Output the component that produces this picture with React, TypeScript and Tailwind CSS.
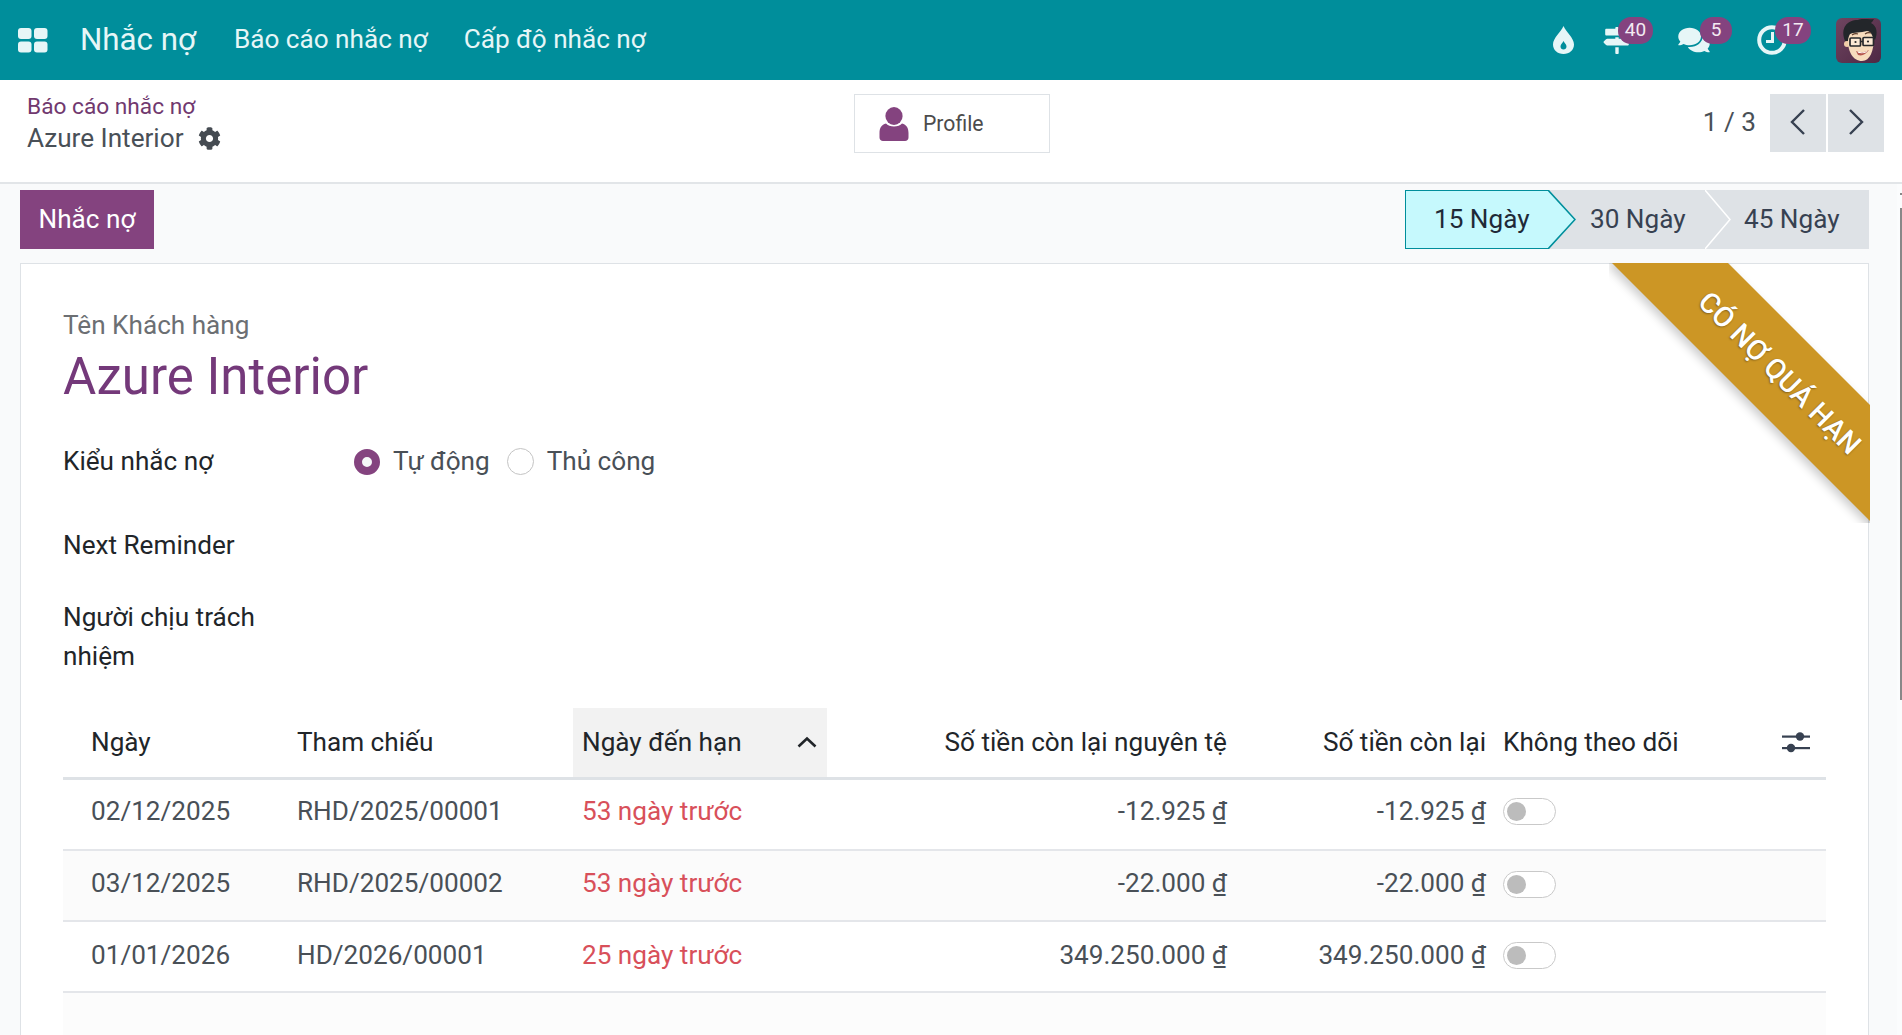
import React from "react";
import { FaCog, FaComments, FaMapSigns } from "react-icons/fa";

const rows = [
  { date: "02/12/2025", ref: "RHD/2025/00001", due: "53 ngày trước", a: "-12.925 ₫", alt: false, h: "h-[72px]", pb: "pb-[6px]" },
  { date: "03/12/2025", ref: "RHD/2025/00002", due: "53 ngày trước", a: "-22.000 ₫", alt: true, h: "h-[71px]", pb: "pb-[4px]" },
  { date: "01/01/2026", ref: "HD/2026/00001", due: "25 ngày trước", a: "349.250.000 ₫", alt: false, h: "h-[71px]", pb: "pb-[3px]" },
];

function Badge({ n, left, width }: { n: string; left: string; width: string }) {
  return (
    <span className={`absolute top-[17px] ${left} ${width} h-[27px] rounded-[13px] bg-[#84437f] text-[19px] leading-[26px] text-center text-[#f3eaf2]`}>
      {n}
    </span>
  );
}

function Avatar() {
  return (
    <svg viewBox="0 0 45 45" className="ml-[49px] w-[45px] h-[45px] rounded-[6px]">
      <defs>
        <linearGradient id="av" x1="0" y1="0" x2="1" y2="1">
          <stop offset="0" stopColor="#6f4560" />
          <stop offset="1" stopColor="#4e2844" />
        </linearGradient>
      </defs>
      <rect width="45" height="45" fill="url(#av)" />
      <circle cx="11" cy="26" r="3" fill="#f0cda8" />
      <path d="M12 18 C11 34 17 43 26 43 C34 43 38 33 38 18 C36 10 16 10 12 18Z" fill="#f7dcbd" />
      <path d="M9 23 C4 10 11 2 22 2 C26 0 33 2 38 1 C37 3 36 4 35 5 C41 8 42 15 39 22 L37 20 C36 16 34 13 31 13 C25 15 17 14 14 16 C13 18 12 20 12 23Z" fill="#23262a" />
      <rect x="14" y="20" width="10.5" height="8" rx="1" fill="#fbe9d4" stroke="#26282b" strokeWidth="1.7" />
      <rect x="27" y="19.5" width="10.5" height="8" rx="1" fill="#fbe9d4" stroke="#26282b" strokeWidth="1.7" />
      <path d="M24 23.5 L27 23.5" stroke="#26282b" strokeWidth="1.4" />
      <path d="M16 17 Q19 15 22 16 M29 16 Q32 14 35 15" stroke="#5c3b2a" strokeWidth="1.1" fill="none" />
      <circle cx="19.5" cy="24" r="1.1" fill="#2a2a2a" />
      <circle cx="32" cy="23.5" r="1.1" fill="#2a2a2a" />
      <path d="M20 33 Q27 36 33 32 Q28 39 22 37Z" fill="#b5574f" />
      <path d="M21.5 33.6 Q27 35.5 31.5 33 L31 34 Q27 36 22 34.8Z" fill="#fff" />
    </svg>
  );
}

function Toggle() {
  return (
    <span className="inline-flex items-center w-[53px] h-[27px] mb-[2px] rounded-full border border-[#c9c9c9] bg-white pl-[3px] align-middle">
      <span className="w-[19px] h-[19px] rounded-full bg-[#bcbcbc]" />
    </span>
  );
}

export default function App() {
  return (
    <div className="relative w-[1902px] h-[1035px] overflow-hidden flex flex-col bg-[#f9fafb] font-['Roboto',sans-serif] text-[26.15px] leading-[39px] text-[#495057]">
      {/* top navigation */}
      <header className="flex items-center h-[80px] shrink-0 bg-[#008e9b] text-[#e6f6f7]">
        <svg viewBox="0 0 30 25" className="ml-[18px] w-[30px] h-[25px]" fill="#e6f6f7">
          <rect x="0" y="0" width="13.5" height="11" rx="3" />
          <rect x="16" y="0" width="13.5" height="11" rx="3" />
          <rect x="0" y="13.5" width="13.5" height="11" rx="3" />
          <rect x="16" y="13.5" width="13.5" height="11" rx="3" />
        </svg>
        <span className="ml-[32px] pb-[2px] text-[31.3px]">Nhắc nợ</span>
        <span className="ml-[38px] pb-[2px]">Báo cáo nhắc nợ</span>
        <span className="ml-[36px] pb-[2px]">Cấp độ nhắc nợ</span>
        <div className="ml-auto mr-[21px] flex items-center">
          <svg viewBox="0 0 21 28" className="w-[21px] h-[28px]">
            <path d="M10.5 0 C13 6 21 12 21 18.5 C21 24 16.5 28 10.5 28 C4.5 28 0 24 0 18.5 C0 12 8 6 10.5 0Z" fill="#e6f6f7" />
            <path d="M10.5 15 C11.5 17 13.5 18.5 13.5 20.5 C13.5 22.2 12.2 23.5 10.5 23.5 C8.8 23.5 7.5 22.2 7.5 20.5 C7.5 18.5 9.5 17 10.5 15Z" fill="#008e9b" />
          </svg>
          <div className="relative ml-[29px] w-[30px] h-[80px] flex items-center">
            <FaMapSigns className="w-[28px] h-[27px]" />
            <Badge n="40" left="left-[15px]" width="w-[35px]" />
          </div>
          <div className="relative ml-[44px] w-[34px] h-[80px] flex items-center">
            <FaComments className="w-[34px] h-[28px]" />
            <Badge n="5" left="left-[23px]" width="w-[32px]" />
          </div>
          <div className="relative ml-[46px] w-[30px] h-[80px] flex items-center">
            <svg viewBox="0 0 30 30" className="w-[30px] h-[30px]" fill="none" stroke="#e6f6f7">
              <circle cx="15" cy="15" r="12.8" strokeWidth="4" />
              <path d="M15.5 7 L15.5 16.5 L9 16.5" strokeWidth="3" />
            </svg>
            <Badge n="17" left="left-[18px]" width="w-[36px]" />
          </div>
          <Avatar />
        </div>
      </header>

      {/* control panel */}
      <section className="grid grid-cols-[854px_196px_1fr] h-[104px] shrink-0 bg-white border-b-2 border-[#e2e5e8]">
        <div className="pl-[27px] pt-[8px]">
          <div className="text-[22.7px] leading-[37px] text-[#71396f]">Báo cáo nhắc nợ</div>
          <div className="flex items-center h-[27px] leading-[27px] text-[#495057]">
            Azure Interior
            <FaCog className="ml-[14px] w-[23px] h-[23px] text-[#454b52]" />
          </div>
        </div>
        <div className="mt-[14px] h-[59px] flex items-center bg-white border border-[#dee2e6] pl-[24px] text-[21.2px] text-[#4c4c4c]">
          <svg viewBox="0 0 30 34" className="w-[30px] h-[34px]" fill="#84437f">
            <ellipse cx="15" cy="9" rx="8.6" ry="9" />
            <path d="M7 16.5 C10 20.5 20 20.5 23 16.5 C27.5 17.5 29.5 21 29.5 26 L29.5 30.5 C29.5 32.5 28 34 26 34 L4 34 C2 34 0.5 32.5 0.5 30.5 L0.5 26 C0.5 21 2.5 17.5 7 16.5Z" />
          </svg>
          <span className="ml-[14px]">Profile</span>
        </div>
        <div className="flex justify-end pr-[18px] pt-[14px]">
          <span className="mr-[14px] h-[58px] leading-[56px] text-[#495057]">1 / 3</span>
          <button className="w-[56px] h-[58px] pb-[2px] flex items-center justify-center bg-[#dee2e6]">
            <svg viewBox="0 0 16 28" className="w-[16px] h-[28px]" fill="none" stroke="#374151" strokeWidth="2.4">
              <path d="M14 2 L2 14 L14 26" />
            </svg>
          </button>
          <button className="ml-[2px] w-[56px] h-[58px] pb-[2px] flex items-center justify-center bg-[#dee2e6]">
            <svg viewBox="0 0 16 28" className="w-[16px] h-[28px]" fill="none" stroke="#374151" strokeWidth="2.4">
              <path d="M2 2 L14 14 L2 26" />
            </svg>
          </button>
        </div>
      </section>

      {/* content */}
      <main className="flex flex-col flex-1 min-h-0 pl-[20px] pr-[33px]">
        <div className="flex justify-between h-[59px] mt-[6px] shrink-0">
          <button className="w-[134px] h-[59px] bg-[#84437f] text-white">Nhắc nợ</button>
          <div className="flex w-[464px] h-[59px] bg-[#dee2e6] text-[#374151]">
            <div className="relative z-10 w-[143px] pl-[28px] flex items-center bg-[#c6f9fd] border-y border-l border-[#008e9b] text-[#1f2937]">
              15 Ngày
              <svg viewBox="0 0 28 59" preserveAspectRatio="none" className="absolute top-[-1px] left-full w-[28px] h-[59px]">
                <path d="M0 0 L28 29.5 L0 59Z" fill="#c6f9fd" />
                <path d="M0 0 L27 29.5 L0 59" fill="none" stroke="#008e9b" strokeWidth="1.6" />
              </svg>
            </div>
            <div className="relative w-[157px] pl-[42px] flex items-center">
              30 Ngày
              <svg viewBox="0 0 26 59" preserveAspectRatio="none" className="absolute top-0 left-full w-[26px] h-[59px]">
                <path d="M0 0 L25 29.5 L0 59" fill="none" stroke="#ffffff" strokeWidth="1.5" />
              </svg>
            </div>
            <div className="w-[164px] pl-[39px] flex items-center">45 Ngày</div>
          </div>
        </div>

        {/* sheet */}
        <div className="relative flex flex-col flex-1 min-h-0 mt-[14px] bg-white border border-[#dee2e6] border-b-0 px-[42px]">
          <div className="absolute -top-px -right-[2px] w-[261px] h-[260px] overflow-hidden">
            <div className="absolute left-[-27px] top-[71px] w-[400px] h-[82px] rotate-45 bg-[#cc9625] shadow-[0_5px_10px_rgba(0,0,0,0.2)] flex items-center justify-center pr-[6px] text-white text-[28.5px] font-medium [text-shadow:0_1px_2px_rgba(0,0,0,0.4)]">
              CÓ NỢ QUÁ HẠN
            </div>
          </div>

          <div className="pt-[42px] text-[#6c6f73]">Tên Khách hàng</div>
          <h1 className="h-[64px] leading-[64px] text-[51px] text-[#74397a]">Azure Interior</h1>

          <div className="grid grid-cols-[291px_1fr] mt-[33px] text-[#212529]">
            <div className="w-[230px]">Kiểu nhắc nợ</div>
            <div className="flex items-center text-[#495057]">
              <span className="w-[26px] h-[26px] rounded-full border-[8px] border-[#84437f] bg-[#f5f7f8]" />
              <span className="ml-[13px]">Tự động</span>
              <span className="ml-[17px] w-[27px] h-[27px] rounded-full border border-[#c4c4c4] bg-white" />
              <span className="ml-[13px]">Thủ công</span>
            </div>
          </div>
          <div className="mt-[45px] text-[#212529]">Next Reminder</div>
          <div className="mt-[33px] w-[230px] text-[#212529]">Người chịu trách nhiệm</div>

          <div className="flex-1 mt-[32px] bg-[#fcfcfc]">
            <table className="w-full table-fixed border-collapse bg-white">
              <colgroup>
                <col className="w-[225px]" />
                <col className="w-[285px]" />
                <col className="w-[254px]" />
                <col className="w-[409px]" />
                <col className="w-[259px]" />
                <col className="w-[275px]" />
                <col className="w-[56px]" />
              </colgroup>
              <thead>
                <tr className="h-[70px] border-b-[3px] border-[#dee2e6] text-[#212529]">
                  <th className="pl-[28px] font-normal text-left">Ngày</th>
                  <th className="pl-[9px] font-normal text-left">Tham chiếu</th>
                  <th className="pl-[9px] pr-[10px] font-normal text-left bg-[#f2f2f2]">
                    <div className="flex items-center justify-between">
                      Ngày đến hạn
                      <svg viewBox="0 0 20 12" className="w-[20px] h-[12px]" fill="none" stroke="#212529" strokeWidth="2.6">
                        <path d="M1.5 10.5 L10 2.5 L18.5 10.5" />
                      </svg>
                    </div>
                  </th>
                  <th className="pr-[9px] font-normal text-right">Số tiền còn lại nguyên tệ</th>
                  <th className="pr-[9px] font-normal text-right">Số tiền còn lại</th>
                  <th className="pl-[8px] font-normal text-left whitespace-nowrap">Không theo dõi</th>
                  <th className="font-normal text-left">
                    <svg viewBox="0 0 28 24" className="ml-[12px] w-[28px] h-[24px]" fill="#374151">
                      <rect x="0" y="5.5" width="28" height="2.2" />
                      <circle cx="18" cy="6.5" r="4.2" />
                      <rect x="0" y="17" width="28" height="2.2" />
                      <circle cx="9" cy="18" r="4.2" />
                    </svg>
                  </th>
                </tr>
              </thead>
              <tbody>
                {rows.map((r) => (
                  <tr key={r.ref} className={`${r.h} border-b-2 border-[#e4e6ea] ${r.alt ? "bg-[#fbfbfb]" : "bg-white"}`}>
                    <td className={`pl-[28px] ${r.pb}`}>{r.date}</td>
                    <td className={`pl-[9px] ${r.pb}`}>{r.ref}</td>
                    <td className={`pl-[9px] ${r.pb} text-[#d8505a]`}>{r.due}</td>
                    <td className={`pr-[9px] ${r.pb} text-right`}>{r.a}</td>
                    <td className={`pr-[9px] ${r.pb} text-right`}>{r.a}</td>
                    <td className={`pl-[8px] ${r.pb}`}>
                      <Toggle />
                    </td>
                    <td />
                  </tr>
                ))}
              </tbody>
            </table>
          </div>
        </div>
      </main>

      {/* scrollbar */}
      <div className="absolute right-0 top-[184px] bottom-0 w-[5px] bg-[#fbfcfd]">
        <div className="absolute right-0 top-[9px] w-[2px] h-[2px] bg-[#888888]" />
        <div className="absolute right-0 top-[24px] w-[2px] h-[492px] bg-[#888888]" />
      </div>
    </div>
  );
}
